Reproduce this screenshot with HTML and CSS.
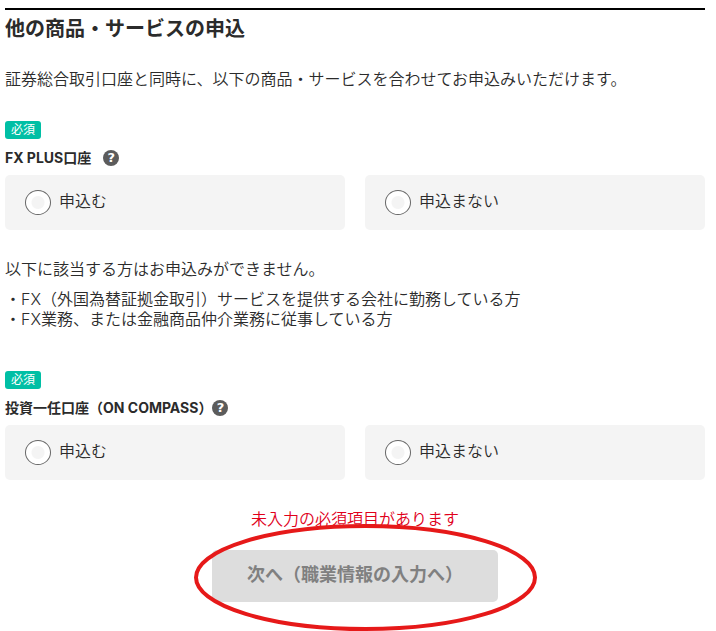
FILE: index.html
```html
<!DOCTYPE html>
<html lang="ja">
<head>
    <meta charset="UTF-8">
    <meta name="viewport" content="width=device-width, initial-scale=1">
    <title>他の商品・サービスの申込</title>
    <link rel="stylesheet" href="styles.css">
</head>
<body>
    <form class="apply">
        <h2 class="apply-title">他の商品・サービスの申込</h2>
        <p class="lead">証券総合取引口座と同時に、以下の商品・サービスを合わせてお申込みいただけます。</p>

        <section class="item">
            <span class="required">必須</span>
            <div class="item-head">
                <h3 class="item-name" id="fxName">FX PLUS口座</h3>
                <button type="button" class="help help-spaced" aria-label="FX PLUS口座について">?</button>
            </div>
            <div class="options" role="radiogroup" aria-labelledby="fxName">
                <label class="option" for="fxYes"><input type="radio" id="fxYes" name="fx"><span>申込む</span></label>
                <label class="option" for="fxNo"><input type="radio" id="fxNo" name="fx"><span>申込まない</span></label>
            </div>
            <p class="note">以下に該当する方はお申込みができません。</p>
            <ul class="note-list">
                <li>・FX（外国為替証拠金取引）サービスを提供する会社に勤務している方</li>
                <li>・FX業務、または金融商品仲介業務に従事している方</li>
            </ul>
        </section>

        <section class="item">
            <span class="required">必須</span>
            <div class="item-head">
                <h3 class="item-name" id="compassName">投資一任口座（ON COMPASS）</h3>
                <button type="button" class="help" aria-label="ON COMPASSについて">?</button>
            </div>
            <div class="options" role="radiogroup" aria-labelledby="compassName">
                <label class="option" for="compassYes"><input type="radio" id="compassYes" name="compass"><span>申込む</span></label>
                <label class="option" for="compassNo"><input type="radio" id="compassNo" name="compass"><span>申込まない</span></label>
            </div>
        </section>

        <div class="submit-area">
            <p class="error">未入力の必須項目があります</p>
            <div class="submit-wrap">
                <button type="submit" class="submit" disabled>次へ（職業情報の入力へ）</button>
                <svg class="marker" viewBox="0 0 343 107" aria-hidden="true">
                    <ellipse cx="171.5" cy="53.5" rx="169.5" ry="51.5" />
                </svg>
            </div>
        </div>
    </form>
</body>
</html>
```

FILE: styles.css
```css
* {
    box-sizing: border-box;
}
body {
    margin: 0;
    padding: 8px 11px 29px 5px;
    background: #fff;
    color: #2b2b2b;
    font-family: Inter, "Noto Sans CJK JP", sans-serif;
    font-size: 16px;
    font-weight: 350;
    line-height: 20px;
}
h2, h3, p, ul {
    margin: 0;
    padding: 0;
}
.apply-title {
    border-top: 2px solid #000;
    font-size: 20px;
    line-height: 38px;
}
.lead {
    margin-top: 19px;
    line-height: 24px;
}
.item {
    padding-top: 30px;
}
.item + .item {
    padding-top: 42px;
}
.required {
    display: block;
    width: 36px;
    border-radius: 3px;
    background: #00bfa5;
    color: #fff;
    font-size: 12px;
    font-weight: 400;
    line-height: 18px;
    text-align: center;
}
.item-head {
    display: flex;
    align-items: center;
    margin: 9px 0 7px;
}
.item-name {
    font-size: 14px;
    line-height: 20px;
}
.help {
    width: 16px;
    height: 16px;
    padding: 0;
    border: none;
    border-radius: 50%;
    background: #5c5c5c;
    color: #fff;
    font-family: "DejaVu Sans", sans-serif;
    font-size: 13px;
    font-weight: bold;
    line-height: 16px;
    text-align: center;
    cursor: pointer;
}
.help-spaced {
    margin-left: 12px;
}
.options {
    display: grid;
    grid-template-columns: 1fr 1fr;
    gap: 20px;
}
.option {
    display: flex;
    align-items: flex-start;
    gap: 8px;
    min-height: 55px;
    padding: 15px 20px;
    border-radius: 5px;
    background: #f4f4f4;
    line-height: 22px;
    cursor: pointer;
}
.option input {
    appearance: none;
    flex: none;
    width: 26px;
    height: 25px;
    margin: 0;
    border: 1px solid #666;
    border-radius: 50%;
    background: radial-gradient(circle, #f4f4f4 6px, #fff 7px);
}
.option input:checked {
    background: radial-gradient(circle, #00bfa5 6px, #fff 7px);
}
.note {
    margin-top: 29px;
}
.note-list {
    margin-top: 10px;
    list-style: none;
}
.submit-area {
    display: flex;
    flex-direction: column;
    align-items: center;
    gap: 21px;
    padding-top: 29px;
}
.error {
    color: #e0001b;
}
.submit-wrap {
    position: relative;
}
.submit {
    display: block;
    padding: 12px 35px 14px;
    border: none;
    border-radius: 5px;
    background: #ddd;
    color: #808080;
    font-family: inherit;
    font-size: 18px;
    font-weight: bold;
    line-height: 26px;
}
/* hand-drawn style ring around the button */
.marker {
    position: absolute;
    top: -26px;
    left: -18px;
    width: 343px;
    height: 107px;
    pointer-events: none;
}
.marker ellipse {
    fill: none;
    stroke: #e61919;
    stroke-width: 4;
}
```
